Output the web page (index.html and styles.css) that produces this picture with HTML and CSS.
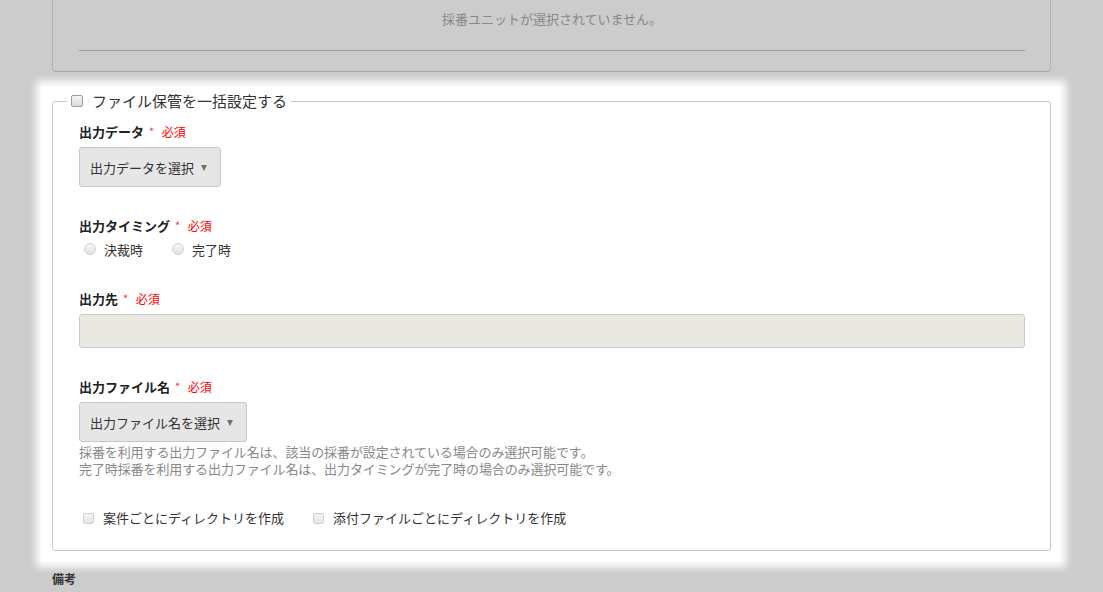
FILE: index.html
```html
<!DOCTYPE html>
<html lang="ja">
<head>
<meta charset="utf-8">
<link rel="stylesheet" href="styles.css">
</head>
<body>
<div class="page">
  <div class="unit-panel">
    <p class="unit-empty">採番ユニットが選択されていません。</p>
    <div class="unit-rule"></div>
  </div>

  <div class="highlight">
    <fieldset class="fs">
      <legend class="fs-legend">
        <input type="checkbox" class="cb cb-legend">
        <span>ファイル保管を一括設定する</span>
      </legend>

      <div class="group g-data">
        <div class="label">出力データ <span class="req"><span class="ast">*</span> 必須</span></div>
        <button class="select sel-data"><span>出力データを選択</span><i class="caret"></i></button>
      </div>

      <div class="group g-timing">
        <div class="label">出力タイミング <span class="req"><span class="ast">*</span> 必須</span></div>
        <div class="radios">
          <label class="radio"><span class="radio-dot"></span>決裁時</label>
          <label class="radio"><span class="radio-dot"></span>完了時</label>
        </div>
      </div>

      <div class="group g-dest">
        <div class="label">出力先 <span class="req"><span class="ast">*</span> 必須</span></div>
        <div class="text-input"></div>
      </div>

      <div class="group g-name">
        <div class="label">出力ファイル名 <span class="req"><span class="ast">*</span> 必須</span></div>
        <button class="select sel-name"><span>出力ファイル名を選択</span><i class="caret"></i></button>
        <div class="help">
          <div>採番を利用する出力ファイル名は、該当の採番が設定されている場合のみ選択可能です。</div>
          <div>完了時採番を利用する出力ファイル名は、出力タイミングが完了時の場合のみ選択可能です。</div>
        </div>
      </div>

      <div class="checks">
        <label class="check"><span class="cb-box"></span>案件ごとにディレクトリを作成</label>
        <label class="check"><span class="cb-box"></span>添付ファイルごとにディレクトリを作成</label>
      </div>
    </fieldset>
  </div>

  <div class="note-label">備考</div>
</div>
</body>
</html>
```

FILE: styles.css
```css
* { box-sizing: border-box; }

html, body {
  margin: 0;
  padding: 0;
  background: #cccccc;
  font-family: "Noto Sans CJK JP", "Noto Sans", sans-serif;
  color: #333;
  overflow: hidden;
}

.page {
  width: 1103px;
  height: 592px;
}

.unit-panel {
  margin-left: 52px;
  width: 999px;
  border: 1px solid #b2b2b2;
  border-top: none;
  border-bottom-color: #a6a6a6;
  border-radius: 0 0 4px 4px;
  padding: 9px 25px 20px 26px;
}

.unit-empty {
  margin: 0;
  height: 20px;
  line-height: 20px;
  font-size: 13px;
  text-align: center;
  color: #888;
}

.unit-rule {
  margin-top: 21px;
  height: 1px;
  background: #9c9c9c;
}

.highlight {
  margin-top: 15px;
  margin-left: 42px;
  width: 1018px;
  padding: 4px 9px 10px 10px;
  background: #fff;
  box-shadow: 0 0 8px 6px #fff;
}

.fs {
  margin: 0;
  width: 999px;
  border: 1px solid #c8c8c8;
  border-radius: 3px;
  padding: 0 25px 23px 26px;
  min-inline-size: 0;
}

.fs-legend {
  margin-left: -12px;
  padding: 0 4px;
  height: 20px;
  line-height: 20px;
  font-size: 15px;
  color: #333;
  display: flex;
  align-items: center;
}

.cb {
  appearance: none;
  -webkit-appearance: none;
  margin: 0;
  width: 12px;
  height: 12px;
  border: 1px solid #9e9e9e;
  border-radius: 2px;
  background: linear-gradient(#f4f4f4, #dcdcdc);
}

.cb-legend { margin-right: 9px; }

.group { display: flex; flex-direction: column; align-items: flex-start; }

.g-data { padding-top: 12px; }
.g-timing { padding-top: 30px; }
.g-dest { padding-top: 31px; }
.g-name { padding-top: 30px; }

.label {
  height: 18px;
  line-height: 18px;
  font-size: 13px;
  font-weight: bold;
  color: #222;
  white-space: nowrap;
  overflow: visible;
}

.req {
  font-weight: normal;
  color: #f00;
  font-size: 12px;
  line-height: 1;
  margin-left: 2px;
}

.ast {
  color: #f33;
  font-size: 11px;
  margin-right: 5px;
  position: relative;
  top: -1px;
}

.select {
  margin-top: 6px;
  height: 40px;
  padding: 0 13px 0 10px;
  background: #e6e6e6;
  border: 1px solid #c6c6c6;
  border-radius: 3px;
  display: flex;
  align-items: center;
  font-family: inherit;
  font-size: 13px;
  color: #333;
  cursor: pointer;
}

.caret {
  display: inline-block;
  margin-left: 7px;
  width: 0;
  height: 0;
  border-left: 3.5px solid transparent;
  border-right: 3.5px solid transparent;
  border-top: 6px solid #707070;
  margin-top: 1px;
}

.radios {
  margin-top: 6px;
  display: flex;
  height: 18px;
  align-items: center;
}

.radio {
  display: flex;
  align-items: center;
  font-size: 13px;
  line-height: 18px;
  color: #333;
  margin-left: 5px;
  margin-right: 24px;
}

.radio-dot {
  width: 12px;
  height: 12px;
  border: 1px solid #cfcfcf;
  border-radius: 50%;
  background: linear-gradient(#f5f5f5, #e2e2e2);
  margin-right: 8px;
  margin-top: -2px;
}

.text-input {
  margin-top: 6px;
  width: 946px;
  height: 34px;
  background: #e9e8e1;
  border: 1px solid #cbcbc6;
  border-radius: 3px;
}

.help {
  margin-top: 1px;
  font-size: 13px;
  line-height: 17px;
  color: #888;
  letter-spacing: -0.1px;
}

.checks {
  margin-top: 32px;
  display: flex;
  height: 18px;
  align-items: center;
}

.check {
  display: flex;
  align-items: center;
  font-size: 13px;
  line-height: 18px;
  color: #333;
  margin-left: 4px;
  margin-right: 25px;
}

.cb-box {
  width: 11px;
  height: 11px;
  border: 1px solid #d0d0d0;
  border-radius: 2px;
  background: linear-gradient(#f5f5f5, #e4e4e4);
  margin-right: 9px;
}

.note-label {
  margin-top: 10px;
  margin-left: 52px;
  font-size: 12px;
  line-height: 16px;
  font-weight: bold;
  color: #333;
}
```
